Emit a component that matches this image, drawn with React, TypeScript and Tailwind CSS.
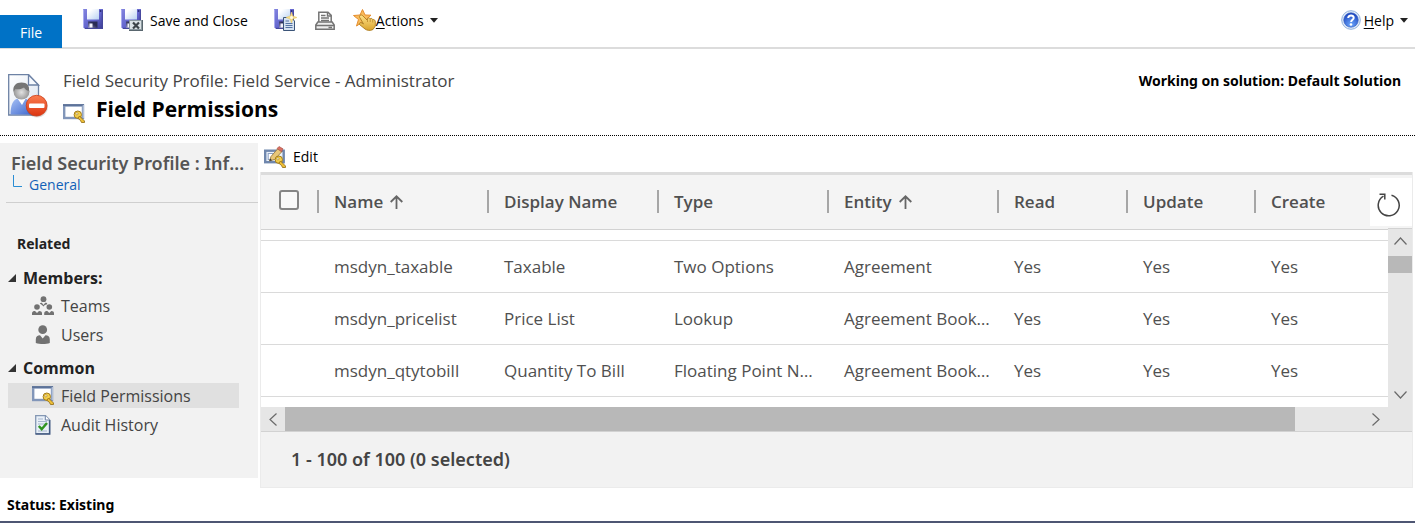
import type { ReactNode } from "react";

const GRID_ROWS = [
  ["msdyn_taxable", "Taxable", "Two Options", "Agreement", "Yes", "Yes", "Yes"],
  ["msdyn_pricelist", "Price List", "Lookup", "Agreement Booking", "Yes", "Yes", "Yes"],
  ["msdyn_qtytobill", "Quantity To Bill", "Floating Point Number", "Agreement Booking", "Yes", "Yes", "Yes"],
];

const COLUMNS = [
  { label: "Name", sorted: true },
  { label: "Display Name" },
  { label: "Type" },
  { label: "Entity", sorted: true },
  { label: "Read" },
  { label: "Update" },
  { label: "Create" },
];

function DiskShape() {
  return (
    <>
      <defs>
        <linearGradient id="disk" x1="0" y1="0" x2="1" y2="1">
          <stop offset="0" stopColor="#8385df" />
          <stop offset="0.55" stopColor="#6365cd" />
          <stop offset="1" stopColor="#3a3c92" />
        </linearGradient>
        <linearGradient id="diskLabel" x1="0" y1="0" x2="1" y2="1">
          <stop offset="0.2" stopColor="#ffffff" />
          <stop offset="1" stopColor="#b9d2f3" />
        </linearGradient>
        <linearGradient id="shutter" x1="0" y1="1" x2="1" y2="0">
          <stop offset="0" stopColor="#8f91c4" />
          <stop offset="0.6" stopColor="#2a2c55" />
        </linearGradient>
      </defs>
      <path d="M0 0H20V20H2L0 18Z" fill="url(#disk)" />
      <path d="M.5 18V.5" stroke="#a9abef" />
      <path d="M19.300 1V19.300H2" fill="none" stroke="#45479b" strokeWidth="1.200" />
      <rect x="4" y="0" width="12" height="10.500" fill="url(#diskLabel)" />
      <rect x="16.800" y="1" width="1.500" height="2" fill="#2f3180" />
      <rect x="5" y="12.500" width="9.500" height="6.500" fill="url(#shutter)" />
      <rect x="6.500" y="14.500" width="3" height="4" fill="#f2f2fb" />
    </>
  );
}

function SaveIcon() {
  return (
    <svg width="20" height="20" viewBox="0 0 20 20" aria-hidden="true">
      <DiskShape />
    </svg>
  );
}

function SaveCloseIcon() {
  return (
    <svg width="22" height="22" viewBox="0 0 22 22" aria-hidden="true">
      <DiskShape />
      <rect x="8" y="11" width="14" height="11" fill="#59666e" />
      <rect x="8.500" y="11.500" width="12" height="9" fill="#dce3e6" stroke="#8c999f" />
      <path d="M12 13.500L18 19.500M18 13.500L12 19.500" stroke="#3d4448" strokeWidth="2.200" />
    </svg>
  );
}

function SaveNewIcon() {
  return (
    <svg width="23" height="22" viewBox="0 0 23 22" aria-hidden="true">
      <DiskShape />
      <path d="M9.500 8.500H17L20.500 12V21.500H9.500Z" fill="#d5e2f1" stroke="#3b5478" />
      <path d="M11.500 12H15M11.500 14.500H18.500M11.500 16.500H18.500M11.500 18.500H18.500" stroke="#5573a3" />
      <path d="M17.500 3L18.800 7L23 8.500L18.800 10L17.500 14L16.200 10L12 8.500L16.200 7Z" fill="#f6dd8a" stroke="#e9c45c" strokeWidth=".5" />
      <circle cx="17.500" cy="8.500" r="1.500" fill="#fffbe6" />
    </svg>
  );
}

function PrintIcon() {
  return (
    <svg width="20" height="20" viewBox="0 0 20 20" fill="none" stroke="#747474" strokeWidth="1.500" aria-hidden="true">
      <path d="M3.800 11V1.200H13L16.200 4.400V11" fill="#fff" />
      <path d="M12.500 1V5H16" />
      <path d="M6 4.500H10.500M6 7H14M6 9.500H14" />
      <path d="M2.800 11H17.200L19.200 14V18.200H.8V14Z" fill="#eeeeee" />
      <path d="M1 14.500H19M13.500 16.500H17" />
    </svg>
  );
}

function ActionsIcon() {
  return (
    <svg width="23" height="22" viewBox="0 0 23 22" aria-hidden="true">
      <defs>
        <linearGradient id="hand" x1="0" y1="0" x2="0" y2="1">
          <stop offset="0" stopColor="#ffe38a" />
          <stop offset="1" stopColor="#d9a32b" />
        </linearGradient>
      </defs>
      <path d="M9.500 .5L12 6L18 6.200L13.500 10L15 16L9.500 13L3.500 17L5.500 10.500L.5 6.500L7 6Z" fill="#f9bb5b" stroke="#e58d2e" />
      <path d="M7 6.500C8 5.500 9 6 10 7L14 11L14.500 9.500C15.500 8.500 17 9 17.200 9.700C18.500 9 19.500 9.800 19.700 10.600C21.500 10.200 22.300 11.500 22.300 13V17L20 20.500C17 22 14 21.500 12 20L6.500 15.500C5.800 14 7.500 13 9 14L10.500 15L7 9C6.300 8 6.300 7 7 6.500Z" fill="url(#hand)" stroke="#ad7b1d" strokeWidth=".9" />
      <path d="M14.500 10V13M17.200 10V13M19.700 11V13.500" stroke="#b98628" strokeWidth=".8" />
    </svg>
  );
}

function HelpIcon() {
  return (
    <svg width="20" height="20" viewBox="0 0 20 20" aria-hidden="true">
      <defs>
        <radialGradient id="help" cx=".5" cy=".8" r=".75">
          <stop offset="0" stopColor="#6ba6fa" />
          <stop offset="1" stopColor="#1c45c0" />
        </radialGradient>
      </defs>
      <circle cx="10" cy="10" r="9.300" fill="#e3edf9" stroke="#8fafdc" />
      <circle cx="10" cy="10" r="7.300" fill="url(#help)" stroke="#3a63bd" strokeWidth=".6" />
      <path d="M7.200 8C7.200 4.600 13 4.700 12.700 8C12.500 9.900 10.200 9.800 10.100 12" fill="none" stroke="#fff" strokeWidth="2" />
      <circle cx="10" cy="14.500" r="1.300" fill="#fff" />
    </svg>
  );
}

function ProfileIcon() {
  return (
    <svg width="42" height="45" viewBox="0 0 42 45" aria-hidden="true">
      <defs>
        <linearGradient id="page" x1="0" y1="0" x2="1" y2="1">
          <stop offset="0" stopColor="#ffffff" />
          <stop offset="1" stopColor="#dbe4f1" />
        </linearGradient>
        <linearGradient id="shirt" x1="0" y1="0" x2="1" y2="1">
          <stop offset="0" stopColor="#a7c2f5" />
          <stop offset="1" stopColor="#4169cf" />
        </linearGradient>
        <radialGradient id="head" cx=".5" cy=".55" r=".6">
          <stop offset="0" stopColor="#e2e2e2" />
          <stop offset="1" stopColor="#868686" />
        </radialGradient>
        <linearGradient id="stop" x1="0" y1="0" x2="0" y2="1">
          <stop offset="0" stopColor="#fa7d50" />
          <stop offset="1" stopColor="#dc3410" />
        </linearGradient>
      </defs>
      <path d="M.7 .7H20.500L30.500 11V41H.7Z" fill="url(#page)" stroke="#6d82a5" strokeWidth="1.300" />
      <path d="M20.500 .7V11H30.500Z" fill="#f7faff" stroke="#6d82a5" strokeWidth="1.300" />
      <path d="M2.500 40.500C2.500 31 5 25.500 10 24.500L16 24C21 25.500 24 29 24 40.500Z" fill="url(#shirt)" />
      <path d="M9.500 24.500L14 31L18 24Z" fill="#fff" />
      <circle cx="13.500" cy="17.500" r="8" fill="url(#head)" />
      <path d="M5.500 17.500C4.500 12 8 8.600 13.500 8.600C19 8.600 22 12 20.800 17C18.500 16.500 17 15 16 13.500C13 15.500 9 15.500 7.500 15Z" fill="#757575" />
      <circle cx="29" cy="32.500" r="11" fill="#000" opacity=".13" />
      <circle cx="28.600" cy="31.700" r="10.400" fill="url(#stop)" stroke="#cf3c17" strokeWidth=".8" />
      <rect x="21" y="29.500" width="15.500" height="4.600" rx="1" fill="#fff" />
    </svg>
  );
}

function KeyShape() {
  return (
    <>
      <circle cx="14.800" cy="10.700" r="3.700" fill="#f3cf4c" stroke="#a37b18" />
      <path d="M16.500 12L21.500 17V18.500H18.500L17.500 16.500L14.800 14.200Z" fill="#eebf35" stroke="#8e6812" strokeWidth=".8" />
      <circle cx="13.900" cy="9.800" r="1.100" fill="#fff" stroke="#a37b18" strokeWidth=".6" />
    </>
  );
}

function FieldKeyIcon() {
  return (
    <svg width="22" height="19" viewBox="0 0 22 19" aria-hidden="true">
      <rect x="1.200" y="1.500" width="18.800" height="12.500" fill="#fff" stroke="#8296b9" strokeWidth="2.400" />
      <path d="M0 1H21" stroke="#50678f" strokeWidth="1.500" />
      <path d="M20.300 1V14" stroke="#b8c6dc" strokeWidth="1.200" />
      <KeyShape />
    </svg>
  );
}

function EditFieldIcon() {
  return (
    <svg width="22" height="22" viewBox="0 0 22 22" aria-hidden="true">
      <rect x="1.200" y="4.700" width="18.500" height="11.500" fill="#eaf0f8" stroke="#6f87ad" strokeWidth="2.400" />
      <rect x="4.200" y="7.500" width="5" height="6" fill="#fff" stroke="#8aa0c4" />
      <path d="M5.500 15L7 10.500L14 2.500L18 5.500L10.500 13.500Z" fill="#e8c77a" stroke="#8f713a" strokeWidth=".8" />
      <path d="M13 2.500L15 .5L19 2.800L17.500 5.800Z" fill="#d97164" stroke="#a64a40" strokeWidth=".6" />
      <path d="M5.500 15L6.300 12.500L8 14.200Z" fill="#333" />
      <g transform="translate(0 3)">
        <KeyShape />
      </g>
    </svg>
  );
}

function TeamsIcon() {
  return (
    <svg width="22" height="20" viewBox="0 0 22 20" fill="#727272" aria-hidden="true">
      <circle cx="11.500" cy="3.200" r="2.900" />
      <path d="M7.800 7.500C8.300 6.600 9.500 6.600 10 6.900L11.500 9L13 6.900C14.300 6.600 15.200 7 15.200 8.200L12.800 9L11.500 10.500L10 9Z" />
      <circle cx="5" cy="11" r="2.800" />
      <circle cx="17.300" cy="11" r="2.800" />
      <path d="M0 19V17.300C0 15.500 1.500 15 3 15L5 17L7 15C8.800 15 10 15.800 10 17.300V19Z" />
      <path d="M12.200 19V17.300C12.200 15.500 13.700 15 15.300 15L17.300 17L19.300 15C21 15 22 15.800 22 17.300V19Z" />
    </svg>
  );
}

function UsersIcon() {
  return (
    <svg width="22" height="20" viewBox="0 0 22 20" fill="#727272" aria-hidden="true">
      <circle cx="10.700" cy="4.700" r="4.400" />
      <path d="M3.800 18V14.500C3.800 11.500 5.500 10.300 8 10.300L10.700 13.500L13.500 10.300C16 10.300 17.800 11.500 17.800 14.500V18C14 19.400 8 19.400 3.800 18Z" />
    </svg>
  );
}

function AuditIcon() {
  return (
    <svg width="22" height="20" viewBox="0 0 22 20" aria-hidden="true">
      <path d="M3.700 .7H13.500L17.500 4.700V18.700H3.700Z" fill="#e9f0f8" stroke="#8497b3" strokeWidth="1.300" />
      <path d="M17.700 5V19H3.500" fill="none" stroke="#435a80" strokeWidth="1.500" />
      <path d="M13.300 .7V5H17.500" fill="#fff" stroke="#6d82a5" />
      <path d="M6 4H11M6 6.500H15M6 9H15M6 16H15" stroke="#a7b7ce" />
      <path d="M6.800 11L9.700 14.200L15 8" fill="none" stroke="#2f9421" strokeWidth="2.500" />
    </svg>
  );
}

function Caret() {
  return (
    <svg width="8" height="5" viewBox="0 0 8 5" aria-hidden="true">
      <path d="M0 0H8L4 4.800Z" fill="#222" />
    </svg>
  );
}

function SortArrow() {
  return (
    <svg width="13" height="14" viewBox="0 0 13 14" fill="none" stroke="#666" strokeWidth="1.800" aria-hidden="true">
      <path d="M6.500 14V1.500M.7 7L6.500 1.300L12.300 7" />
    </svg>
  );
}

function Chevron({ d, w, h }: { d: string; w: number; h: number }) {
  return (
    <svg width={w} height={h} viewBox={`0 0 ${w} ${h}`} fill="none" stroke="#6a6a6a" strokeWidth="1.200" aria-hidden="true">
      <path d={d} />
    </svg>
  );
}

function NavGroup({ title, children }: { title: string; children: ReactNode }) {
  return (
    <section>
      <h3 className="flex h-6 items-center gap-[7px] pl-2 text-[16px] font-bold text-[#222]">
        <svg width="8" height="8" viewBox="0 0 8 8" aria-hidden="true">
          <path d="M8 0V8H0Z" fill="#333" />
        </svg>
        {title}
      </h3>
      <ul className="mt-[3px] flex flex-col gap-1 pr-[19px] pl-2">{children}</ul>
    </section>
  );
}

function NavItem({ icon, label, active = false }: { icon: ReactNode; label: string; active?: boolean }) {
  return (
    <li>
      <a
        href="#"
        className={`flex h-[25px] items-center gap-[7px] pl-6 text-[16px] text-[#444] ${active ? "bg-[#e0e0e0]" : ""}`}
      >
        {icon}
        {label}
      </a>
    </li>
  );
}

export default function App() {
  return (
    <div className="flex min-h-screen flex-col border-b-2 border-[#4e5673] bg-white font-['Open_Sans','Noto_Sans',sans-serif] text-black">
      <header className="flex h-[49px] items-start border-b-2 border-[#dcdcdc] text-[14px]">
        <button className="mt-[15px] h-[33px] w-[62px] shrink-0 bg-[#0072c6] pt-0.5 text-white">File</button>
        <div className="flex flex-1 items-start pt-[9px] pl-[21px]">
          <button aria-label="Save" className="mr-[18px]">
            <SaveIcon />
          </button>
          <button className="mr-[26px] flex h-[22px] items-center gap-[7px]">
            <SaveCloseIcon />
            Save and Close
          </button>
          <button aria-label="Save and New" className="mr-[18px]">
            <SaveNewIcon />
          </button>
          <button aria-label="Print" className="mt-0.5 mr-[18px]">
            <PrintIcon />
          </button>
          <button className="flex h-[22px] items-center">
            <ActionsIcon />
            <span className="mr-1.5">
              <u className="underline-offset-2">A</u>ctions
            </span>
            <Caret />
          </button>
        </div>
        <button className="mt-[9px] mr-[7px] flex h-[22px] items-center">
          <HelpIcon />
          <span className="mr-1.5 ml-[3px]">
            <u className="underline-offset-2">H</u>elp
          </span>
          <Caret />
        </button>
      </header>

      <div className="flex h-[87px] items-start border-b border-dotted border-black pt-5 pr-3.5 pl-2">
        <div className="mt-[5px] mr-[13px]">
          <ProfileIcon />
        </div>
        <div className="flex-1">
          <p className="text-[17px] leading-6 text-[#444]">Field Security Profile: Field Service - Administrator</p>
          <h1 className="flex items-center gap-[11px] text-[21px] leading-8 font-bold">
            <span className="pt-2">
              <FieldKeyIcon />
            </span>
            Field Permissions
          </h1>
        </div>
        <p className="font-['Noto_Sans',sans-serif] text-[14px] leading-6 font-bold">
          Working on solution: Default Solution
        </p>
      </div>

      <div className="mt-[7px] flex items-start">
        <nav className="h-[335px] w-[258px] shrink-0 bg-[#f2f2f2]">
          <div className="ml-1.5 border-b border-[#cfcfcf] pt-2 pb-[7px] pl-[5px]">
            <h2 className="truncate pr-2 font-['Noto_Sans',sans-serif] text-[18px] leading-6 font-semibold text-[#555]">
              Field Security Profile : Information
            </h2>
            <a href="#" className="flex items-start gap-[7px] pl-0.5 text-[14px] leading-5 text-[#1160b7]">
              <svg width="9" height="12" viewBox="0 0 9 12" fill="none" stroke="#2a8dd4" aria-hidden="true">
                <path d="M.5 0V11.500H9" />
              </svg>
              General
            </a>
          </div>
          <h2 className="mt-[31px] mb-3 pl-[17px] font-['Noto_Sans',sans-serif] text-[14px] leading-5 font-bold text-[#222]">
            Related
          </h2>
          <div className="flex flex-col gap-[9px]">
            <NavGroup title="Members:">
              <NavItem icon={<TeamsIcon />} label="Teams" />
              <NavItem icon={<UsersIcon />} label="Users" />
            </NavGroup>
            <NavGroup title="Common">
              <NavItem icon={<FieldKeyIcon />} label="Field Permissions" active />
              <NavItem icon={<AuditIcon />} label="Audit History" />
            </NavGroup>
          </div>
        </nav>

        <main className="min-w-0 flex-1 pr-0.5 pl-0.5">
          <div className="flex h-[29px] items-start pt-[3px] pl-1 text-[14px] leading-5">
            <button className="flex items-center gap-[7px]">
              <EditFieldIcon />
              Edit
            </button>
          </div>

          <div className="border border-t-0 border-[#ebebeb]">
            <div className="flex border-t-3 border-[#dcdcdc]">
              <div className="h-[232px] min-w-0 flex-1 overflow-hidden">
                <table className="w-full table-fixed border-collapse text-left text-[17px] text-[#505050]">
                  <colgroup>
                    <col className="w-[56px]" />
                    <col className="w-[170px]" />
                    <col className="w-[170px]" />
                    <col className="w-[170px]" />
                    <col className="w-[170px]" />
                    <col className="w-[129px]" />
                    <col className="w-[128px]" />
                    <col />
                  </colgroup>
                  <thead className="bg-[#f4f4f4]">
                    <tr className="h-[54px] border-b border-[#d2d2d2]">
                      <th className="pt-0 pb-1 pl-[18px]">
                        <input
                          type="checkbox"
                          aria-label="Select all records"
                          className="block size-5 appearance-none rounded-[3px] border-2 border-[#858585] bg-[#f8f8f8]"
                        />
                      </th>
                      {COLUMNS.map((c) => (
                        <th key={c.label} className="p-0 font-semibold">
                          <button className="flex h-[23px] items-center gap-[7px] border-l-2 border-[#a6a6a6] pl-[15px]">
                            {c.label}
                            {c.sorted && <SortArrow />}
                          </button>
                        </th>
                      ))}
                    </tr>
                  </thead>
                  <tbody>
                    <tr className="h-[11px] border-b border-[#dadada]">
                      <td colSpan={8} className="p-0" />
                    </tr>
                    {GRID_ROWS.map((row) => (
                      <tr key={row[0]} className="h-[52px] border-b border-[#dadada]">
                        <td className="p-0" />
                        {row.map((cell, i) => (
                          <td key={i} className="truncate pt-0.5 pr-1 pb-0 pl-[17px]">
                            {cell}
                          </td>
                        ))}
                      </tr>
                    ))}
                  </tbody>
                </table>
              </div>
              <div className="flex w-6 flex-col">
                <div className="flex h-[54px] items-center justify-end border-b border-[#d2d2d2] bg-[#f4f4f4]">
                  <button aria-label="Refresh" className="-ml-[18px] flex h-12 w-[42px] shrink-0 items-center bg-white pt-1.5 pl-[7px]">
                    <svg width="24" height="24" viewBox="0 0 24 24" fill="none" stroke="#444" strokeWidth="1.500" aria-hidden="true">
                      <path d="M14.500 2.200A10.500 10.500 0 1 1 6.500 3.200M2.500 1.200H7.800V6.500" />
                    </svg>
                  </button>
                </div>
                <div className="flex flex-1 flex-col items-center bg-[#e6e6e6]">
                  <button aria-label="Scroll up" className="flex h-[27px] items-start pt-2">
                    <Chevron w={13} h={8} d="M.5 7.500L6.500 1L12.500 7.500" />
                  </button>
                  <div className="h-[17px] w-full bg-[#b8b8b8]" />
                  <button aria-label="Scroll down" className="mt-auto flex h-[24px] items-center">
                    <Chevron w={13} h={8} d="M.5 .5L6.500 7L12.500 .5" />
                  </button>
                </div>
              </div>
            </div>
            <div className="flex h-[25px] border-b border-[#d2d2d2] bg-[#e6e6e6]">
              <button aria-label="Scroll left" className="flex w-6 items-center justify-center">
                <Chevron w={8} h={13} d="M7.500 .5L1 6.500L7.500 12.500" />
              </button>
              <div className="flex flex-1">
                <div className="w-[93.6%] bg-[#b8b8b8]" />
              </div>
              <button aria-label="Scroll right" className="mr-6 flex w-6 items-center justify-center">
                <Chevron w={8} h={13} d="M.5 .5L7 6.500L.5 12.500" />
              </button>
            </div>
            <p className="bg-[#f2f2f2] px-[30px] py-[15px] font-['Noto_Sans',sans-serif] text-[18px] leading-[25px] font-semibold text-[#444]">
              1 - 100 of 100 (0 selected)
            </p>
          </div>
        </main>
      </div>

      <footer className="px-[7px] pt-[7px] pb-1 font-['Noto_Sans',sans-serif] text-[14px] leading-5 font-bold">
        Status: Existing
      </footer>
    </div>
  );
}
